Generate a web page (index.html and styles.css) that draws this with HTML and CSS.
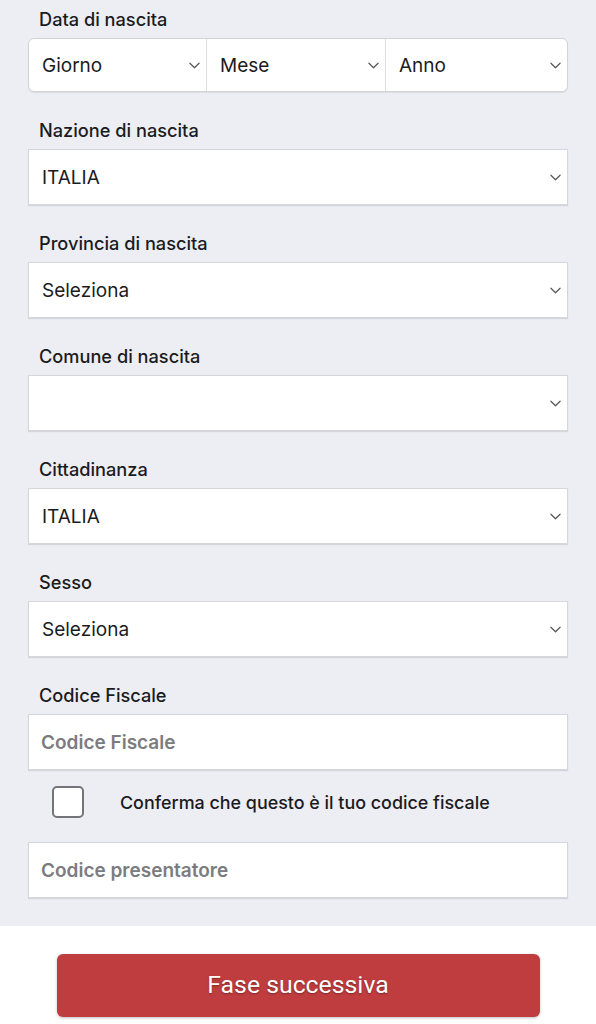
FILE: index.html
```html
<!DOCTYPE html>
<html lang="it">
<head>
<meta charset="utf-8">
<title>Registrazione</title>
<link rel="stylesheet" href="styles.css">
</head>
<body>
<form class="form">
  <div class="field">
    <label class="label">Data di nascita</label>
    <div class="date-group">
      <div class="seg">
        <span class="value">Giorno</span>
        <svg class="chev" viewBox="0 0 12 7"><path d="M1 1l5 5 5-5"/></svg>
      </div>
      <div class="seg">
        <span class="value">Mese</span>
        <svg class="chev" viewBox="0 0 12 7"><path d="M1 1l5 5 5-5"/></svg>
      </div>
      <div class="seg">
        <span class="value">Anno</span>
        <svg class="chev" viewBox="0 0 12 7"><path d="M1 1l5 5 5-5"/></svg>
      </div>
    </div>
  </div>

  <div class="field">
    <label class="label">Nazione di nascita</label>
    <div class="box">
      <span class="value">ITALIA</span>
      <svg class="chev" viewBox="0 0 12 7"><path d="M1 1l5 5 5-5"/></svg>
    </div>
  </div>

  <div class="field">
    <label class="label">Provincia di nascita</label>
    <div class="box">
      <span class="value">Seleziona</span>
      <svg class="chev" viewBox="0 0 12 7"><path d="M1 1l5 5 5-5"/></svg>
    </div>
  </div>

  <div class="field">
    <label class="label">Comune di nascita</label>
    <div class="box">
      <span class="value"></span>
      <svg class="chev" viewBox="0 0 12 7"><path d="M1 1l5 5 5-5"/></svg>
    </div>
  </div>

  <div class="field">
    <label class="label">Cittadinanza</label>
    <div class="box">
      <span class="value">ITALIA</span>
      <svg class="chev" viewBox="0 0 12 7"><path d="M1 1l5 5 5-5"/></svg>
    </div>
  </div>

  <div class="field">
    <label class="label">Sesso</label>
    <div class="box">
      <span class="value">Seleziona</span>
      <svg class="chev" viewBox="0 0 12 7"><path d="M1 1l5 5 5-5"/></svg>
    </div>
  </div>

  <div class="field last">
    <label class="label">Codice Fiscale</label>
    <div class="box">
      <span class="placeholder">Codice Fiscale</span>
    </div>
  </div>

  <div class="check-row">
    <span class="checkbox"></span>
    <span class="check-text">Conferma che questo è il tuo codice fiscale</span>
  </div>

  <div class="box">
    <span class="placeholder">Codice presentatore</span>
  </div>
</form>

<div class="footer">
  <button class="next" type="button">Fase successiva</button>
</div>
</body>
</html>
```

FILE: styles.css
```css
* { box-sizing: border-box; }

html, body {
  margin: 0;
  padding: 0;
  background: #ffffff;
}

body {
  font-family: Inter, "Noto Sans", sans-serif;
  color: #1b1b1d;
}

.form {
  background: #edeef3;
  padding: 0 28px 28px;
}

.field {
  padding-top: 8px;
  margin-bottom: 19px;
}

.field.last { margin-bottom: 0; }

.label {
  display: block;
  font-size: 18.2px;
  font-weight: 500;
  line-height: 22px;
  padding-left: 11px;
  margin-bottom: 8px;
  color: #1b1b1d;
}

.date-group {
  display: grid;
  grid-template-columns: 177px 179px 1fr;
  height: 54px;
  background: #fff;
  border: 1px solid #d3d4d8;
  border-radius: 6px;
  box-shadow: 0 1px 1px rgba(0, 0, 0, 0.08);
  overflow: hidden;
}

.seg {
  display: flex;
  align-items: center;
  justify-content: space-between;
  padding: 0 6px 0 13px;
  border-left: 1px solid #dcdde0;
}

.seg:first-child { border-left: none; }

.box {
  display: flex;
  align-items: center;
  justify-content: space-between;
  height: 56px;
  background: #fff;
  border: 1px solid #d6d7db;
  box-shadow: 0 1px 1px rgba(0, 0, 0, 0.1);
  padding: 0 6px 0 13px;
}

.value {
  font-size: 19px;
  line-height: 24px;
  padding-top: 2px;
  color: #1b1b1d;
}

.placeholder {
  font-size: 19px;
  font-weight: 600;
  color: #7c7c7f;
  margin-left: -1px;
}

.chev {
  width: 11px;
  height: 7px;
  flex: none;
  fill: none;
  stroke: #55565a;
  stroke-width: 1.3;
  stroke-linecap: round;
  stroke-linejoin: round;
}

.check-row {
  display: flex;
  align-items: center;
  gap: 36px;
  padding-left: 24px;
  margin: 16px 0 24px;
}

.checkbox {
  width: 32px;
  height: 32px;
  flex: none;
  border: 2px solid #747479;
  border-radius: 5px;
  background: #fff;
}

.check-text {
  font-size: 17.9px;
  font-weight: 500;
  color: #1b1b1d;
}

.footer {
  padding: 28px 0 8px;
  background: #fff;
}

.next {
  display: block;
  width: 483px;
  height: 63px;
  margin: 0 auto;
  padding: 0 0 2px;
  border: none;
  border-radius: 6px;
  background: #bf3d3e;
  box-shadow: 0 1px 3px rgba(0, 0, 0, 0.25);
  color: #fff;
  font-family: Roboto, "Liberation Sans", sans-serif;
  font-size: 24.8px;
  font-weight: 400;
  text-shadow: 0 1px 2px rgba(0, 0, 0, 0.35);
  cursor: pointer;
}
```
